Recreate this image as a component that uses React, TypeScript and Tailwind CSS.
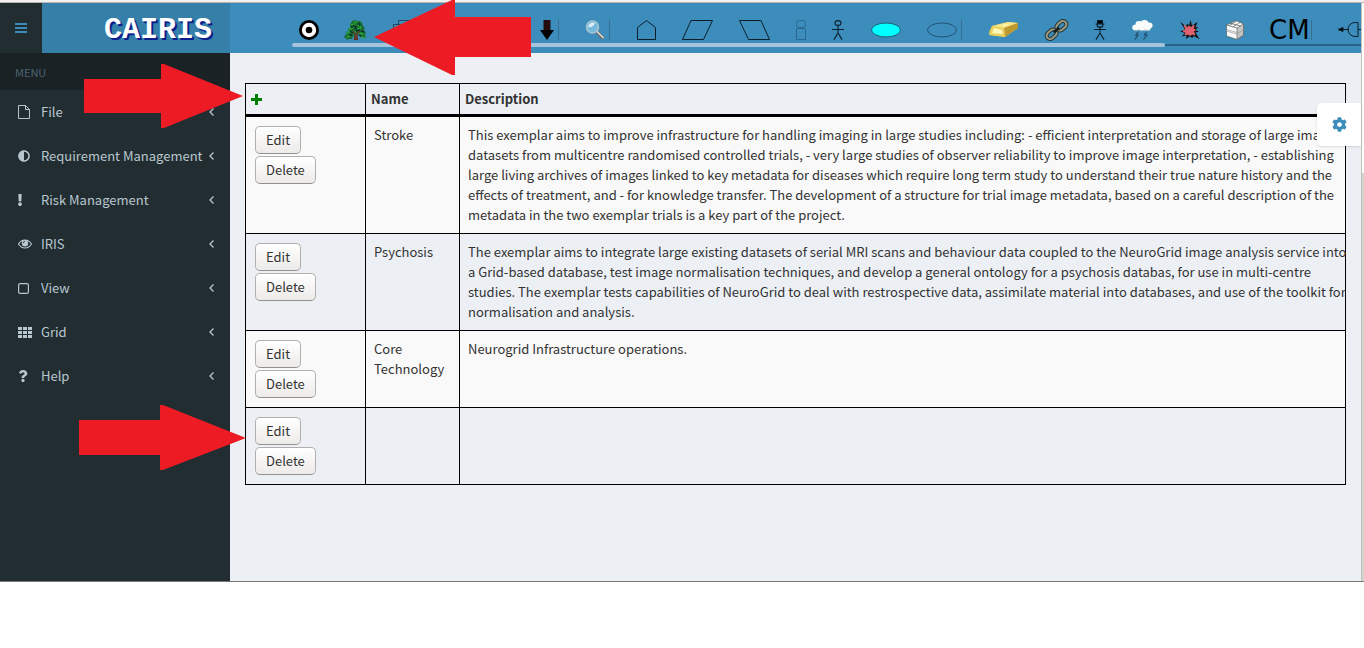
import React from "react";
import { FaCog, FaAdjust, FaExclamation, FaQuestion } from "react-icons/fa";

type Tool = { name: string; width: number; separator?: boolean; drawing: React.ReactNode };

const Person = ({ hat }: { hat?: boolean }) => (
  <g fill="none" stroke="#0b1f2b" strokeWidth="1.1">
    {hat ? <path d="M3.5 0.5h5v3.500h-5zM1.500 4h9" fill="#000" /> : null}
    <ellipse cx="6" cy={hat ? 5.2 : 3} rx="3" ry={hat ? 2 : 2.4} />
    <path d="M6 6v7M0 9.5h12M6 13l-4 6.6M6 13l4 6.6" />
  </g>
);

const tools: Tool[] = [
  {
    name: "Goals", width: 20,
    drawing: (<g><circle cx="10" cy="10" r="10" fill="#000" /><circle cx="10" cy="10" r="7.2" fill="#fff" /><circle cx="10" cy="10" r="3.3" fill="#000" /></g>),
  },
  {
    name: "Environment", width: 22,
    drawing: (
      <g>
        <path d="M9 9h4l-.5 5 .8 6H8.600l1-6z" fill="#5d3325" />
        <path d="M7 1l3-1 2 1 3 0 2 2 1 3 2 2-1 2 2 3-1 2 1 3-3-1-2 1-1-3-3-1-2 2-2 0-1 3-3 0-2 1-1-2-2 0 1-3 2-1-1-2 3-1-1-2 2-1 0-3z" fill="#1b6b33" />
        <path d="M9 2h3M6 5l4-1M13 5l3 2M4 9l4-1M12 9l4-1M2 13l4-2M14 13l5 1M2 17l4-2M16 17l4 1M8 12l3 0" stroke="#25ab35" strokeWidth="1.500" />
        <path d="M8 5l3 2M14 3l1 3M5 11l3 2M11 11l4-1M16 11l3 1M4 15l3 0M10 8l2 1M14 15l2 1M6 7l2 0" stroke="#0b2c2c" strokeWidth="1.400" />
        <path d="M8 11l2.500 3v5M15 11l-3 3v5" fill="none" stroke="#6b3a30" strokeWidth="1.200" />
      </g>
    ),
  },
  {
    name: "Domain properties", width: 20,
    drawing: <path d="M5.500 4.500v-4h12v10h-4M.500 4.500h12v10H.500zM.500 9h12" fill="none" stroke="#1f4961" />,
  },
  {
    name: "Dependencies", width: 14, separator: true,
    drawing: (<g><path d="M3.500 0h7v11h-7z" fill="#260b0f" /><path d="M0 10h14L7 20z" fill="#000" /></g>),
  },
  {
    name: "Find", width: 20, separator: true,
    drawing: (
      <g>
        <path d="M11 11l7 7.500" stroke="#5e6e78" strokeWidth="3.400" />
        <path d="M11.500 11l7 7" stroke="#e4dccb" strokeWidth="1.600" />
        <circle cx="7.500" cy="7" r="6" fill="#75b9dc" stroke="#a9c4cf" strokeWidth="1.600" />
        <path d="M3 7a5 5 0 0 1 7-4C9 6 6 8 3 7" fill="#d7ecf5" />
      </g>
    ),
  },
  { name: "Requirements", width: 20, drawing: <path d="M1.500 19.500v-12l9-7 9 7v12z" fill="none" stroke="#0b1f2b" /> },
  { name: "Obstacles", width: 31, drawing: <path d="M9 .500h21.500l-9 19H.500z" fill="none" stroke="#0b1f2b" /> },
  { name: "Countermeasures", width: 31, drawing: <path d="M.500 .500H22l8.500 19H9.500z" fill="none" stroke="#0b1f2b" /> },
  {
    name: "Roles", width: 10,
    drawing: (<g fill="none" stroke="#27688f"><rect x=".500" y=".500" width="9" height="7" rx="3" /><path d="M.500 8.500h9v11h-9z" /></g>),
  },
  { name: "Personas", width: 13, drawing: <Person /> },
  { name: "Tasks", width: 30, drawing: <ellipse cx="15" cy="10" rx="14.500" ry="7" fill="#00ffff" stroke="#176078" /> },
  { name: "Use cases", width: 30, separator: true, drawing: <ellipse cx="15" cy="10" rx="14.500" ry="7" fill="none" stroke="#235574" /> },
  {
    name: "Assets", width: 31,
    drawing: (
      <g>
        <path d="M4 6L20 2l10 1v5L17 17 2 15 1 12z" fill="#dfc044" />
        <path d="M4 6L20 2l10 1L16 8z" fill="#f5e68b" />
        <path d="M16 8L30 3v5l-13 9z" fill="#bd9932" />
        <path d="M4 6l12 2 1 9-16-2z" fill="#ead25f" />
        <path d="M6 8l8 2 1 4-11-1zM14 5l10-2-8 3z" fill="#fff8bd" />
      </g>
    ),
  },
  {
    name: "Associations", width: 23,
    drawing: (
      <g transform="rotate(-41 11.500 10)" fill="none">
        <g stroke="#263437" strokeWidth="4"><rect x="-.500" y="6.500" width="11" height="7" rx="3.500" /><rect x="12.500" y="6.500" width="11" height="7" rx="3.500" /></g>
        <g stroke="#9b9c82" strokeWidth="2"><rect x="-.500" y="6.500" width="11" height="7" rx="3.500" /><rect x="12.500" y="6.500" width="11" height="7" rx="3.500" /></g>
        <path d="M8 10h7" stroke="#17211f" strokeWidth="3" />
      </g>
    ),
  },
  { name: "Attackers", width: 12, drawing: <Person hat /> },
  {
    name: "Threats", width: 21,
    drawing: (
      <g>
        <g fill="#fafbfb"><ellipse cx="4" cy="7.500" rx="3.800" ry="3" /><ellipse cx="7" cy="4" rx="3.500" ry="3" /><ellipse cx="12.500" cy="3.500" rx="4" ry="3.500" /><ellipse cx="17" cy="5.500" rx="3.600" ry="3" /><ellipse cx="10" cy="8" rx="5" ry="3" /><ellipse cx="15" cy="8.500" rx="3.500" ry="2.500" /></g>
        <path d="M2 10.500q3 .500 5-.500q3 2 6 0q2 1 4 0" fill="none" stroke="#8ba9b8" strokeWidth=".900" />
        <path d="M6 12l-2 3h2l-3 4.500M14.500 12l-2 3h2.500l-3.500 4.500" fill="none" stroke="#1f4a66" strokeWidth="1.200" />
      </g>
    ),
  },
  {
    name: "Vulnerabilities", width: 21,
    drawing: (
      <g>
        <path d="M1 1.500l6 5 1-3 2 2L11.500 0l1.500 5.500L18.500 2l-2 5.500 3-.500-3 3 3.500 1.500-3.500 1 4 6.500-6-3-1 2-3-1.500-3.500 2.500.500-3.500-5 1 3.500-3.500-5-1.500 5-2-2-3z" fill="#151417" />
        <path d="M5 5l3.500 2.500L10 6l2 1.500L15 5l-.500 4 2 1-2 1.500 1.500 3.500-3-1-2 1.500-2-1.500-3 1 1-2.500-3-1.500 3-1.500z" fill="#e0616b" stroke="#e0616b" />
      </g>
    ),
  },
  {
    name: "Risks", width: 18,
    drawing: (
      <g stroke="#59605f" strokeWidth=".700">
        <path d="M.500 5L10 .500 17.500 4v11L11 19.500.500 16z" fill="#fafafa" />
        <path d="M11 8l6.500-4v11L11 19.500z" fill="#c4c4c4" />
        <path d="M.500 5L11 8M4 3.200L14.500 6M11 1L3 5.700M14 2.400L7 7" fill="none" />
        <path d="M.500 11L11 14l6.500-4.500M.500 9.500L11 12.500" fill="none" stroke="#999" />
      </g>
    ),
  },
  {
    name: "Countermeasure model", width: 37, separator: true,
    drawing: <text x="-1" y="19" fontSize="26" fill="#000" className="font-['DejaVu_Sans']">CM</text>,
  },
  {
    name: "Trust boundaries", width: 30,
    drawing: (<g fill="none" stroke="#0b1f2b"><path d="M5 9.500h6M20 2.500h-3a7 7 0 0 0 0 14h3zM20 9.500h10" /><path d="M0 9.500l5-2v4z" fill="#000" /></g>),
  },
];

const menu: { label: string; icon: React.ReactNode }[] = [
  { label: "File", icon: <svg width="12" height="14" viewBox="0 0 12 14" fill="none" stroke="currentColor"><path d="M.500 .500h7l4 4v9H.500zM7.500 .500v4h4" /></svg> },
  { label: "Requirement Management", icon: <FaAdjust size={12} /> },
  { label: "Risk Management", icon: <FaExclamation size={12} className="-ml-1" /> },
  {
    label: "IRIS",
    icon: (
      <svg width="14" height="10" viewBox="0 0 14 10" className="overflow-visible">
        <path d="M.500 5Q3 1 7 1t6.500 4Q11 9 7 9T.500 5z" fill="none" stroke="currentColor" strokeWidth="1.200" />
        <circle cx="7" cy="4.300" r="3.200" fill="currentColor" /><path d="M5.200 4.200A2 2 0 0 1 7 2.400" fill="none" stroke="#222d32" strokeWidth=".800" />
      </svg>
    ),
  },
  { label: "View", icon: <svg width="11" height="11" viewBox="0 0 11 11"><rect x=".600" y=".600" width="9.800" height="9.800" rx="1.500" fill="none" stroke="currentColor" strokeWidth="1.200" /></svg> },
  { label: "Grid", icon: <svg width="14" height="11" viewBox="0 0 14 11" fill="currentColor"><path d="M0 0h4v3H0zM5 0h4v3H5zM10 0h4v3h-4zM0 4h4v3H0zM5 4h4v3H5zM10 4h4v3h-4zM0 8h4v3H0zM5 8h4v3H5zM10 8h4v3h-4z" /></svg> },
  { label: "Help", icon: <FaQuestion size={12} className="-ml-px" /> },
];

const rows = [
  {
    name: "Stroke",
    description: [
      "This exemplar aims to improve infrastructure for handling imaging in large studies including: - efficient interpretation and storage of large image",
      "datasets from multicentre randomised controlled trials, - very large studies of observer reliability to improve image interpretation, - establishing",
      "large living archives of images linked to key metadata for diseases which require long term study to understand their true nature history and the",
      "effects of treatment, and - for knowledge transfer. The development of a structure for trial image metadata, based on a careful description of the",
      "metadata in the two exemplar trials is a key part of the project.",
    ],
  },
  {
    name: "Psychosis",
    description: [
      "The exemplar aims to integrate large existing datasets of serial MRI scans and behaviour data coupled to the NeuroGrid image analysis service into",
      "a Grid-based database, test image normalisation techniques, and develop a general ontology for a psychosis databas, for use in multi-centre",
      "studies. The exemplar tests capabilities of NeuroGrid to deal with restrospective data, assimilate material into databases, and use of the toolkit for",
      "normalisation and analysis.",
    ],
  },
  { name: "Core Technology", description: ["Neurogrid Infrastructure operations."] },
  { name: "", description: [] },
];

function Toolbar() {
  return (
    <nav aria-label="Models" className="flex min-w-0 flex-1 flex-col overflow-hidden bg-[#3c8dbc] pt-[17px]">
      <div className="flex h-5 gap-[26px] pl-[69px]">
        {tools.map((tool) => (
          <React.Fragment key={tool.name}>
            {tool.name === "Dependencies" && <span className="w-[75px] shrink-0" />}
            <button type="button" aria-label={tool.name} className="flex h-5 shrink-0 items-center gap-1">
              <svg width={tool.width} height="20" className="shrink-0 overflow-visible">{tool.drawing}</svg>
              {tool.separator && <span className="h-5 w-px bg-[#3a6e8f]" />}
            </button>
          </React.Fragment>
        ))}
      </div>
      <div className="mt-[3px] ml-[62px] flex items-center">
        <div className="h-1 w-[873px] rounded-full bg-[#a6c3dc]" />
        <div className="h-[2px] flex-1 bg-[#27638a]" />
      </div>
    </nav>
  );
}

function Sidebar() {
  return (
    <aside className="w-[230px] shrink-0 bg-[#222d32] text-[#b8c7ce]">
      <h2 className="flex h-[37px] items-center bg-[#1a2226] pl-[15px] text-[11px] text-[#4b646f]">MENU</h2>
      <ul>
        {menu.map((item) => (
          <li key={item.label}>
            <a href="#" className="flex h-11 items-center pr-[15px] pl-[18px]">
              <span className="flex w-[23px] items-center">{item.icon}</span>
              <span className="flex-1 whitespace-nowrap">{item.label}</span>
              <svg width="6" height="8" fill="none" stroke="currentColor" strokeWidth="1.300"><path d="M4.500 .500L1 4l3.500 3.500" /></svg>
            </a>
          </li>
        ))}
      </ul>
    </aside>
  );
}

const buttonClass = "h-7 rounded-[5px] border border-[#b2b0ad] border-b-[#93918f] bg-linear-to-b from-white to-[#edebe9] px-[10px] leading-5";

function ExemplarTable() {
  return (
    <table className="w-full table-fixed border-separate border-spacing-0 border-t border-l border-black bg-[#ecf0f5] text-left">
      <colgroup><col className="w-[120px]" /><col className="w-[94px]" /><col /></colgroup>
      <thead>
        <tr className="h-[33px]">
          <th className="border-r border-b-3 border-black px-[5px]">
            <button type="button" aria-label="Add" className="block text-[#008000]">
              <svg width="11" height="11" fill="currentColor" className="block"><path d="M4 0h3v4h4v3H7v4H4V7H0V4h4z" /></svg>
            </button>
          </th>
          <th className="border-r border-b-3 border-black px-[5px]">Name</th>
          <th className="border-r border-b-3 border-black px-[5px]">Description</th>
        </tr>
      </thead>
      <tbody>
        {rows.map((row, i) => (
          <tr key={i} className="align-top odd:bg-[#f9f9f9]">
            <td className="border-r border-b border-black p-[9px]">
              <div className="flex flex-col items-start gap-[2px]">
                <button type="button" className={buttonClass}>Edit</button>
                <button type="button" className={buttonClass}>Delete</button>
              </div>
            </td>
            <td className="border-r border-b border-black p-2">{row.name}</td>
            <td className="border-r border-b border-black py-2 pl-2 whitespace-normal xl:whitespace-pre">{row.description.join("\n")}</td>
          </tr>
        ))}
      </tbody>
    </table>
  );
}

export default function App() {
  return (
    <div className="relative min-h-screen overflow-hidden bg-white font-['Noto_Sans_CJK_SC','Noto_Sans',sans-serif] text-[13px] leading-5 text-[#333]">
      <div className="h-[3px] border-b border-[#b8b4b0] bg-[#f2f1f0]" />
      <div className="flex border-b border-[#777]">
        <div className="min-w-0 flex-1">
          <header className="flex h-[50px]">
            <button type="button" aria-label="Toggle menu" className="flex w-[42px] items-center justify-center bg-[#222d32] text-[#3c8dbc]">
              <svg width="12" height="10" fill="currentColor"><path d="M0 0h12v2H0zM0 4h12v2H0zM0 8h12v2H0z" /></svg>
            </button>
            <a href="#" className="flex w-[188px] shrink-0 items-center justify-end bg-[#367fa9] pt-1 pr-[18px] font-['Liberation_Mono',monospace] text-[30px] font-bold text-white [text-shadow:2px_2px_0_#0b1f8c]">CAIRIS</a>
            <Toolbar />
          </header>
          <div className="flex min-h-[calc(100vh-120px)]">
            <Sidebar />
            <main className="min-w-0 flex-1 bg-[#ecf0f5] px-[15px] pt-[30px]"><ExemplarTable /></main>
          </div>
        </div>
        <div className="flex w-[3px] flex-col border-l border-[#c4c1bd] bg-[#d4d3cc]">
          <div className="h-[170px] rounded-b bg-white" />
        </div>
      </div>
      <button type="button" aria-label="Settings" className="absolute top-[103px] right-[3px] flex h-[43px] w-11 items-center justify-center rounded-l-[5px] bg-white text-[#3c8dbc] shadow"><FaCog size={15} /></button>
      <svg className="pointer-events-none absolute top-0 left-0" width="540" height="480" fill="#ed1c24" aria-hidden="true">
        <path d="M374 37L452 0h3v17h76v40h-76v18h-3z" />
        <path d="M84 79h77V64h3l79 32-79 32h-3v-15H84z" />
        <path d="M79 420h81v-15h3l83 33-83 32h-3v-15H79z" />
      </svg>
    </div>
  );
}
